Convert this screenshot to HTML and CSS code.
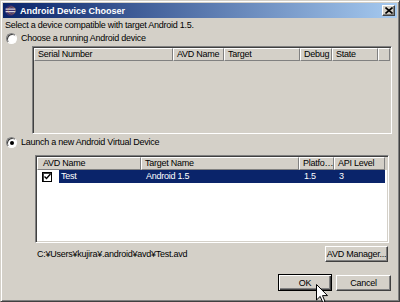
FILE: index.html
```html
<!DOCTYPE html>
<html>
<head>
<meta charset="utf-8">
<title>Android Device Chooser</title>
<link rel="stylesheet" href="styles.css">
</head>
<body>
<div class="window">
	<div class="titlebar">
		<svg class="app-icon" width="11" height="11" viewBox="0 0 11 11">
			<circle cx="5.5" cy="5.5" r="5.2" fill="#3b2d6e"/>
			<rect x="0.6" y="3.6" width="9.8" height="1" fill="#fff"/>
			<rect x="0.6" y="6.2" width="9.8" height="1" fill="#fff"/>
			<circle cx="6.6" cy="5.5" r="3.6" fill="none" stroke="#f4b43a" stroke-width="0.6" opacity="0.6"/>
		</svg>
		<span class="title">Android Device Chooser</span>
		<div class="close">
			<svg width="8" height="7" viewBox="0 0 8 7">
				<path d="M0.5 0.5 L7.5 6.5 M7.5 0.5 L0.5 6.5" stroke="#000" stroke-width="1.6"/>
			</svg>
		</div>
	</div>
	<div class="content">
		<div class="msg">Select a device compatible with target Android 1.5.</div>
		<div class="radio-row"><span class="radio"></span><span>Choose a running Android device</span></div>
		<div class="table devices">
			<div class="thead">
				<div class="th">Serial Number</div>
				<div class="th">AVD Name</div>
				<div class="th">Target</div>
				<div class="th">Debug</div>
				<div class="th">State</div>
				<div class="th"></div>
			</div>
		</div>
		<div class="radio-row second"><span class="radio checked"></span><span>Launch a new Android Virtual Device</span></div>
		<div class="table avds">
			<div class="thead">
				<div class="th">AVD Name</div>
				<div class="th">Target Name</div>
				<div class="th">Platfo…</div>
				<div class="th">API Level</div>
			</div>
			<div class="row">
				<div class="cell first">
					<span class="check">
						<svg width="7" height="7" viewBox="0 0 7 7"><path d="M0.5 3.5 L2.5 5.5 L6.5 1" fill="none" stroke="#000" stroke-width="1.4"/></svg>
					</span>
					<span class="sel">Test</span>
				</div>
				<div class="cell sel">Android 1.5</div>
				<div class="cell sel">1.5</div>
				<div class="cell sel">3</div>
			</div>
		</div>
		<div class="path-row">
			<span class="path">C:¥Users¥kujira¥.android¥avd¥Test.avd</span>
			<button class="btn manager">AVD Manager...</button>
		</div>
		<div class="buttons">
			<button class="btn default">OK</button>
			<button class="btn">Cancel</button>
		</div>
	</div>
	<svg class="cursor" width="13" height="20" viewBox="0 0 13 20">
		<path d="M0.5 0.5 L0.5 16 L4.2 12.4 L6.8 18.5 L9 17.5 L6.5 11.6 L11.5 11.6 Z" fill="#fff" stroke="#000" stroke-width="1"/>
	</svg>
</div>
</body>
</html>
```

FILE: styles.css
```css
body{
	margin: 0;
	background-color: #D4D0C8;
	font-family: "Liberation Sans", Arial, sans-serif;
	font-size: 9px;
	letter-spacing: -0.25px;
	color: #000;
}
.window{
	position: relative;
	box-sizing: border-box;
	width: 400px;
	height: 302px;
	border: 1px solid;
	border-color: #D4D0C8 #404040 #404040 #D4D0C8;
	box-shadow: inset 1px 1px #fff, inset -1px -1px #808080;
	padding: 2px;
}
.titlebar{
	display: flex;
	align-items: center;
	height: 15px;
	padding-left: 2px;
	background: linear-gradient(to right, #0A246A, #A6CAF0);
	color: #fff;
}
.app-icon{
	margin-right: 4px;
}
.title{
	font-weight: bold;
	font-size: 9px;
	letter-spacing: 0;
}
.close{
	display: flex;
	align-items: center;
	justify-content: center;
	box-sizing: border-box;
	width: 13px;
	height: 11px;
	margin-left: auto;
	margin-right: 2px;
	background-color: #D4D0C8;
	border: 1px solid;
	border-color: #fff #404040 #404040 #fff;
	box-shadow: inset -1px -1px #808080;
}
.content{
	padding: 0 4px 0 2px;
}
.msg{
	height: 12px;
	line-height: 12px;
	margin-top: 1px;
}
.radio-row{
	display: flex;
	align-items: center;
	height: 12px;
	line-height: 12px;
	margin-top: 1px;
}
.radio-row.second{
	margin-top: 2px;
}
.radio{
	position: relative;
	box-sizing: border-box;
	width: 11px;
	height: 11px;
	margin: 0 4px 0 1px;
	border-radius: 50%;
	background-color: #fff;
	border: 1px solid;
	border-color: #808080 #fff #fff #808080;
	box-shadow: inset 1px 1px #404040;
}
.radio.checked::after{
	content: "";
	position: absolute;
	left: 3px;
	top: 3px;
	width: 4px;
	height: 4px;
	border-radius: 50%;
	background-color: #000;
}
.table{
	box-sizing: border-box;
	border: 1px solid;
	border-color: #808080 #fff #fff #808080;
	box-shadow: inset 1px 1px #404040, inset -1px -1px #D4D0C8;
	padding: 1px;
}
.devices{
	width: 360px;
	height: 88px;
	margin: 2px 0 0 27px;
}
.avds{
	width: 354px;
	height: 88px;
	margin: 7px 0 0 30px;
	background-color: #fff;
}
.thead{
	display: grid;
	height: 13px;
	background-color: #D4D0C8;
}
.devices .thead{
	grid-template-columns: 139px 51px 76px 32px 46px 1fr;
}
.avds .thead{
	grid-template-columns: 104px 158px 35px 51px;
}
.th{
	box-sizing: border-box;
	height: 13px;
	line-height: 11px;
	padding-left: 3px;
	border: 1px solid;
	border-color: #fff #808080 #808080 #fff;
	white-space: nowrap;
	overflow: hidden;
}
.avds .th:first-child{
	padding-left: 5px;
}
.row{
	display: grid;
	grid-template-columns: 104px 158px 35px 51px;
	height: 13px;
	line-height: 13px;
}
.cell{
	white-space: nowrap;
}
.cell.sel{
	background-color: #0A246A;
	color: #fff;
	padding-left: 5px;
}
.cell.first{
	display: flex;
	align-items: center;
}
.cell.first .sel{
	flex: 1;
	align-self: stretch;
	background-color: #0A246A;
	color: #fff;
	padding-left: 2px;
}
.check{
	display: flex;
	align-items: center;
	justify-content: center;
	box-sizing: border-box;
	width: 10px;
	height: 10px;
	margin: 0 7px 0 5px;
	background-color: #fff;
	border: 1px solid #000;
	box-shadow: inset 1px 1px #404040;
}
.path-row{
	display: flex;
	align-items: center;
	justify-content: space-between;
	width: 351px;
	height: 16px;
	margin: 3px 0 0 32px;
}
.btn{
	box-sizing: border-box;
	height: 16px;
	padding: 0;
	font-family: inherit;
	font-size: 9px;
	letter-spacing: -0.25px;
	color: #000;
	background-color: #D4D0C8;
	border: 1px solid;
	border-color: #fff #404040 #404040 #fff;
	box-shadow: inset -1px -1px #808080;
	border-radius: 0;
}
.btn.manager{
	width: 63px;
}
.buttons{
	display: flex;
	justify-content: flex-end;
	gap: 4px;
	margin-top: 13px;
	padding-right: 2px;
}
.buttons .btn{
	width: 55px;
	height: 16px;
}
.btn.default{
	width: 54px;
	height: 17px;
	margin-top: -1px;
	border: 1px solid #000;
	box-shadow: inset 1px 1px #fff, inset -1px -1px #404040, inset -2px -2px #808080;
}
.cursor{
	position: absolute;
	left: 315px;
	top: 283px;
}
```
